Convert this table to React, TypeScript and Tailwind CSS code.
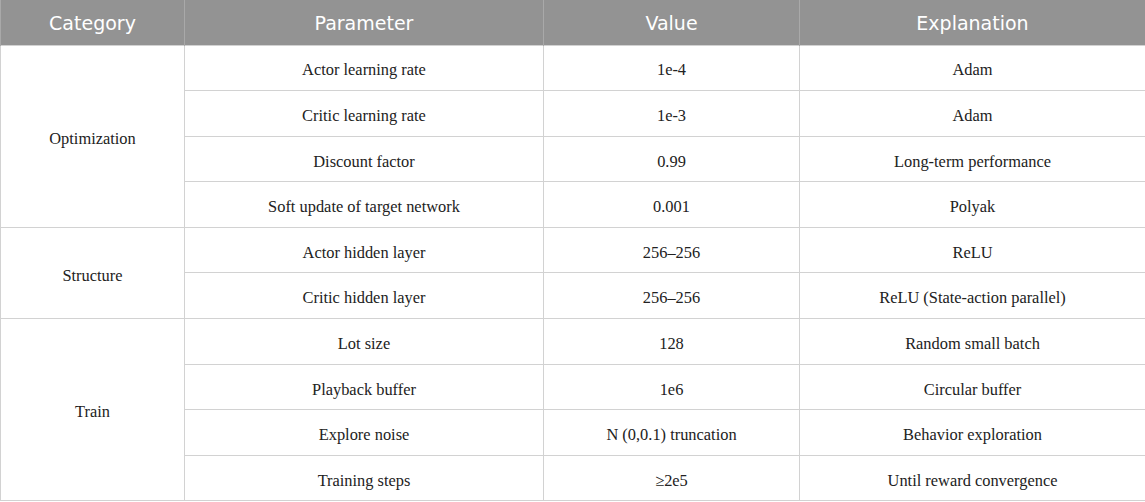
type Row = {
  param: string;
  value: string;
  note: string;
};

type Group = {
  category: string;
  rows: Row[];
};

const groups: Group[] = [
  {
    category: "Optimization",
    rows: [
      { param: "Actor learning rate", value: "1e-4", note: "Adam" },
      { param: "Critic learning rate", value: "1e-3", note: "Adam" },
      { param: "Discount factor", value: "0.99", note: "Long-term performance" },
      { param: "Soft update of target network", value: "0.001", note: "Polyak" },
    ],
  },
  {
    category: "Structure",
    rows: [
      { param: "Actor hidden layer", value: "256–256", note: "ReLU" },
      { param: "Critic hidden layer", value: "256–256", note: "ReLU (State-action parallel)" },
    ],
  },
  {
    category: "Train",
    rows: [
      { param: "Lot size", value: "128", note: "Random small batch" },
      { param: "Playback buffer", value: "1e6", note: "Circular buffer" },
      { param: "Explore noise", value: "N (0,0.1) truncation", note: "Behavior exploration" },
      { param: "Training steps", value: "≥2e5", note: "Until reward convergence" },
    ],
  },
];

const cell =
  "border border-[#d2d2d2] pt-[6px] text-center align-middle text-[16.4px] text-[#222] font-[family-name:'Liberation_Serif','Times_New_Roman',serif]";

export default function App() {
  return (
    <div className="w-[1145px] h-[502px] bg-white overflow-hidden">
      <table className="w-[1145px] table-fixed border-collapse">
        <colgroup>
          <col className="w-[184px]" />
          <col className="w-[359px]" />
          <col className="w-[256px]" />
          <col className="w-[346px]" />
        </colgroup>
        <thead>
          <tr className="h-[45px] bg-[#939393] text-white text-[19px] font-[family-name:'DejaVu_Sans',sans-serif]">
            <th className="font-normal pt-[2px] border-x border-[#a9a9a9]">Category</th>
            <th className="font-normal pt-[2px] border-x border-[#a9a9a9]">Parameter</th>
            <th className="font-normal pt-[2px] border-x border-[#a9a9a9]">Value</th>
            <th className="font-normal pt-[2px] border-x border-[#a9a9a9]">Explanation</th>
          </tr>
        </thead>
        <tbody>
          {groups.map((g) =>
            g.rows.map((r, i) => (
              <tr key={g.category + r.param} className="h-[45.6px]">
                {i === 0 && (
                  <td rowSpan={g.rows.length} className={cell}>
                    {g.category}
                  </td>
                )}
                <td className={cell}>{r.param}</td>
                <td className={cell}>{r.value}</td>
                <td className={cell}>{r.note}</td>
              </tr>
            ))
          )}
        </tbody>
      </table>
    </div>
  );
}
